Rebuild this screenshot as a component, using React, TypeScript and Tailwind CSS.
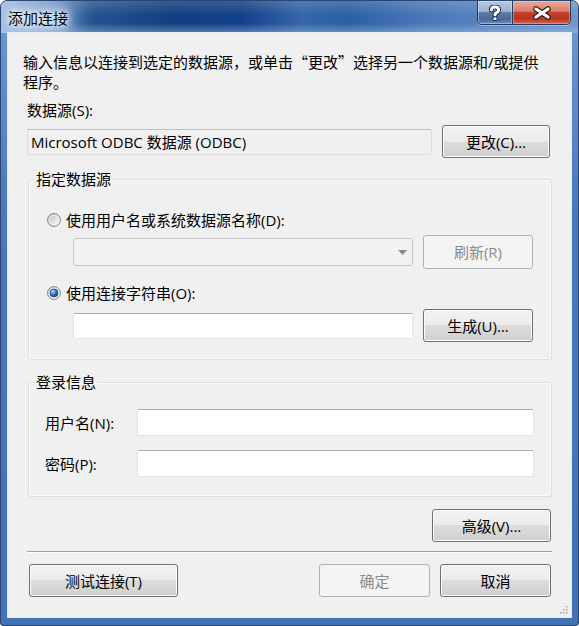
import React from "react";

interface BtnProps {
  children: React.ReactNode;
  className?: string;
  disabled?: boolean;
}

function WinButton({ children, className = "", disabled = false }: BtnProps) {
  return (
    <button
      type="button"
      disabled={disabled}
      className={`h-[33px] shrink-0 rounded-[3px] border text-[15px] leading-[20px] ${
        disabled
          ? "border-[#adb2b5] bg-[#f4f4f4] text-[#8a8a8a]"
          : "border-[#707070] bg-[linear-gradient(180deg,#f2f2f2_0%,#ebebeb_50%,#dddddd_50%,#cfcfcf_100%)] text-black shadow-[inset_0_0_0_1px_#fcfcfc]"
      } ${className}`}
    >
      {children}
    </button>
  );
}

function Radio({ checked = false }: { checked?: boolean }) {
  return (
    <svg width="14" height="14" viewBox="0 0 14 14" className="shrink-0">
      <defs>
        <linearGradient id="rwell" x1="0" y1="0" x2="1" y2="1">
          <stop offset="0" stopColor="#bdbdbd" />
          <stop offset="1" stopColor="#ffffff" />
        </linearGradient>
        <radialGradient id="rdot" cx="0.35" cy="0.3" r="0.8">
          <stop offset="0" stopColor="#c6e4ff" />
          <stop offset="0.45" stopColor="#3d80cf" />
          <stop offset="1" stopColor="#0d3266" />
        </radialGradient>
      </defs>
      <circle cx="7" cy="7" r="6.4" fill="url(#rwell)" stroke="#7d7e7e" />
      <circle cx="7" cy="7" r="5" fill="none" stroke="#f6f6f6" strokeWidth="0.8" />
      {checked && (
        <circle cx="7" cy="7" r="4" fill="url(#rdot)" stroke="#1b4174" strokeWidth="0.7" />
      )}
    </svg>
  );
}

function TextBox({ className = "" }: { className?: string }) {
  return (
    <input
      type="text"
      className={`shrink-0 rounded-[2px] border border-[#e2e3ea] border-t-[#abadb3] bg-white outline-none ${className}`}
    />
  );
}

function GroupBox({
  title,
  className = "",
  children,
}: {
  title: string;
  className?: string;
  children: React.ReactNode;
}) {
  return (
    <fieldset
      className={`ml-[1px] w-[524px] rounded-[3px] border border-[#d5dfe5] shadow-[inset_0_0_0_1px_#fafbfc] ${className}`}
    >
      <legend className="ml-[6px] px-[1px] leading-[20px]">{title}</legend>
      {children}
    </fieldset>
  );
}

export default function App() {
  return (
    <div
      lang="zh-CN"
      className="w-[579px] h-[626px] overflow-hidden rounded-t-[7px] rounded-b-[3px] border border-[#2a4670] bg-[linear-gradient(180deg,#6f99d0_0%,#4878bc_35%,#4172b8_100%)] font-['Open_Sans','Noto_Sans_CJK_SC',sans-serif] text-[15px] leading-[20px] text-black"
    >
      {/* title bar */}
      <div className="flex h-[32px] items-start bg-[linear-gradient(180deg,rgba(255,255,255,0.15)_0%,rgba(255,255,255,0)_45%,rgba(255,255,255,0)_70%,rgba(170,200,238,0.45)_100%),linear-gradient(90deg,#9dbbe2_0%,#7097cb_9%,#24548f_16%,#123f80_30%,#14428a_42%,#3566a8_52%,#2c5fa4_60%,#4a79b8_74%,#5b87c2_88%,#6f97cb_100%)]">
        <div className="pl-[7px] pt-[7px] [text-shadow:0_0_6px_#fff,0_0_10px_#fff,0_0_14px_#fff,0_0_18px_#fff]">
          添加连接
        </div>
        <div className="ml-auto mr-[7px] flex h-[24px] overflow-hidden rounded-b-[5px] border border-t-0 border-[#223b60] shadow-[0_1px_0_rgba(255,255,255,0.35)]">
          <div className="flex w-[34px] items-center justify-center bg-[linear-gradient(180deg,#b7c9e0_0%,#99b1d1_46%,#5e7ca7_50%,#4b6a98_80%,#6d90bf_100%)] shadow-[inset_0_0_0_1px_rgba(255,255,255,0.35)]">
            <svg width="14" height="16" viewBox="-7 -8 14 16">
              <g fill="none" strokeLinecap="round" strokeLinejoin="round">
                <path d="M-3.6 -3.2 Q-3.6 -6 0 -6 Q3.6 -6 3.6 -3.2 Q3.6 -1.2 1 0 Q0 0.6 0 2" stroke="#1c304d" strokeWidth="5" />
                <path d="M-3.6 -3.2 Q-3.6 -6 0 -6 Q3.6 -6 3.6 -3.2 Q3.6 -1.2 1 0 Q0 0.6 0 2" stroke="#ffffff" strokeWidth="3" />
              </g>
              <rect x="-2.5" y="3.5" width="5" height="4.5" rx="0.8" fill="#1c304d" />
              <rect x="-1.5" y="4.5" width="3" height="2.5" fill="#ffffff" />
            </svg>
          </div>
          <div className="flex w-[58px] items-center justify-center border-l border-[#223b60] bg-[linear-gradient(180deg,#e9a898_0%,#d9806d_44%,#c2402c_50%,#b83522_78%,#d8664c_100%)] shadow-[inset_0_0_0_1px_rgba(255,255,255,0.3)]">
            <svg width="20" height="14" viewBox="-10 -7 20 14">
              <g strokeLinecap="round">
                <path d="M-6 -4 L6 4 M6 -4 L-6 4" stroke="#3a1510" strokeWidth="5.5" />
                <path d="M-6 -4 L6 4 M6 -4 L-6 4" stroke="#ffffff" strokeWidth="3.3" />
              </g>
            </svg>
          </div>
        </div>
      </div>

      {/* client area */}
      <div className="relative ml-[7px] h-[584px] w-[563px] bg-[#f0f0f0] pl-[19px] pt-[19px] shadow-[0_0_0_1px_#e4ebf4]">
        <p className="-ml-[4px] w-[530px]">
          输入信息以连接到选定的数据源，或单击
          <span className="font-['Noto_Sans_CJK_SC',sans-serif]">“</span>更改
          <span className="font-['Noto_Sans_CJK_SC',sans-serif]">”</span>
          选择另一个数据源和/或提供
          <br />
          程序。
        </p>

        <div className="mt-[8px]">数据源(S):</div>
        <div className="mt-[5px] flex items-center gap-[10px]">
          <div className="flex h-[26px] w-[405px] items-center rounded-[2px] border border-[#dcdcdc] border-t-[#bdbdbd] pl-[3px]">
            Microsoft ODBC 数据源 (ODBC)
          </div>
          <WinButton className="w-[108px]">更改(C)...</WinButton>
        </div>

        <GroupBox title="指定数据源" className="mt-[11px]">
          <div className="pb-[17px] pl-[18px] pt-[21px]">
            <div className="flex h-[20px] items-center gap-[5px]">
              <Radio />
              <span>使用用户名或系统数据源名称(D):</span>
            </div>
            <div className="ml-[26px] mt-[5px] flex items-center gap-[10px]">
              <div className="flex h-[28px] w-[340px] items-center justify-end rounded-[3px] border border-[#c6c6c6] bg-[#f2f2f2] pr-[5px]">
                <svg width="9" height="5" viewBox="0 0 9 5">
                  <path d="M0 0 L9 0 L4.5 5 Z" fill="#8a8a8a" />
                </svg>
              </div>
              <WinButton disabled className="h-[34px] w-[110px]">
                刷新(R)
              </WinButton>
            </div>
            <div className="mt-[14px] flex h-[20px] items-center gap-[5px]">
              <Radio checked />
              <span>使用连接字符串(O):</span>
            </div>
            <div className="ml-[26px] mt-[6px] flex items-center gap-[10px]">
              <TextBox className="h-[26px] w-[340px]" />
              <WinButton className="h-[32px] w-[110px]">生成(U)...</WinButton>
            </div>
          </div>
        </GroupBox>

        <GroupBox title="登录信息" className="mt-[12px]">
          <div className="pb-[19px] pl-[16px] pt-[17px]">
            <div className="flex items-center">
              <span className="w-[92px]">用户名(N):</span>
              <TextBox className="h-[27px] w-[397px]" />
            </div>
            <div className="mt-[14px] flex items-center">
              <span className="w-[92px]">密码(P):</span>
              <TextBox className="h-[27px] w-[397px]" />
            </div>
          </div>
        </GroupBox>

        <div className="mt-[12px] flex w-[524px] justify-end">
          <WinButton className="w-[119px]">高级(V)...</WinButton>
        </div>

        <div className="mt-[9px] h-[2px] w-[525px] border-b border-t border-b-white border-t-[#a0a0a0]" />

        <div className="mt-[11px] flex w-[524px] items-center">
          <WinButton className="ml-[2px] w-[149px]">测试连接(T)</WinButton>
          <WinButton disabled className="ml-auto w-[111px]">
            确定
          </WinButton>
          <WinButton className="ml-[10px] w-[111px]">取消</WinButton>
        </div>

        {/* size grip */}
        <svg width="10" height="10" viewBox="0 0 10 10" className="absolute bottom-[2px] right-[2px]">
          {[
            [8, 2],
            [8, 5],
            [5, 5],
            [8, 8],
            [5, 8],
            [2, 8],
          ].map(([x, y]) => (
            <rect key={`${x}-${y}`} x={x - 1} y={y - 1} width="1.5" height="1.5" fill="#a0a0a0" />
          ))}
        </svg>
      </div>
    </div>
  );
}
